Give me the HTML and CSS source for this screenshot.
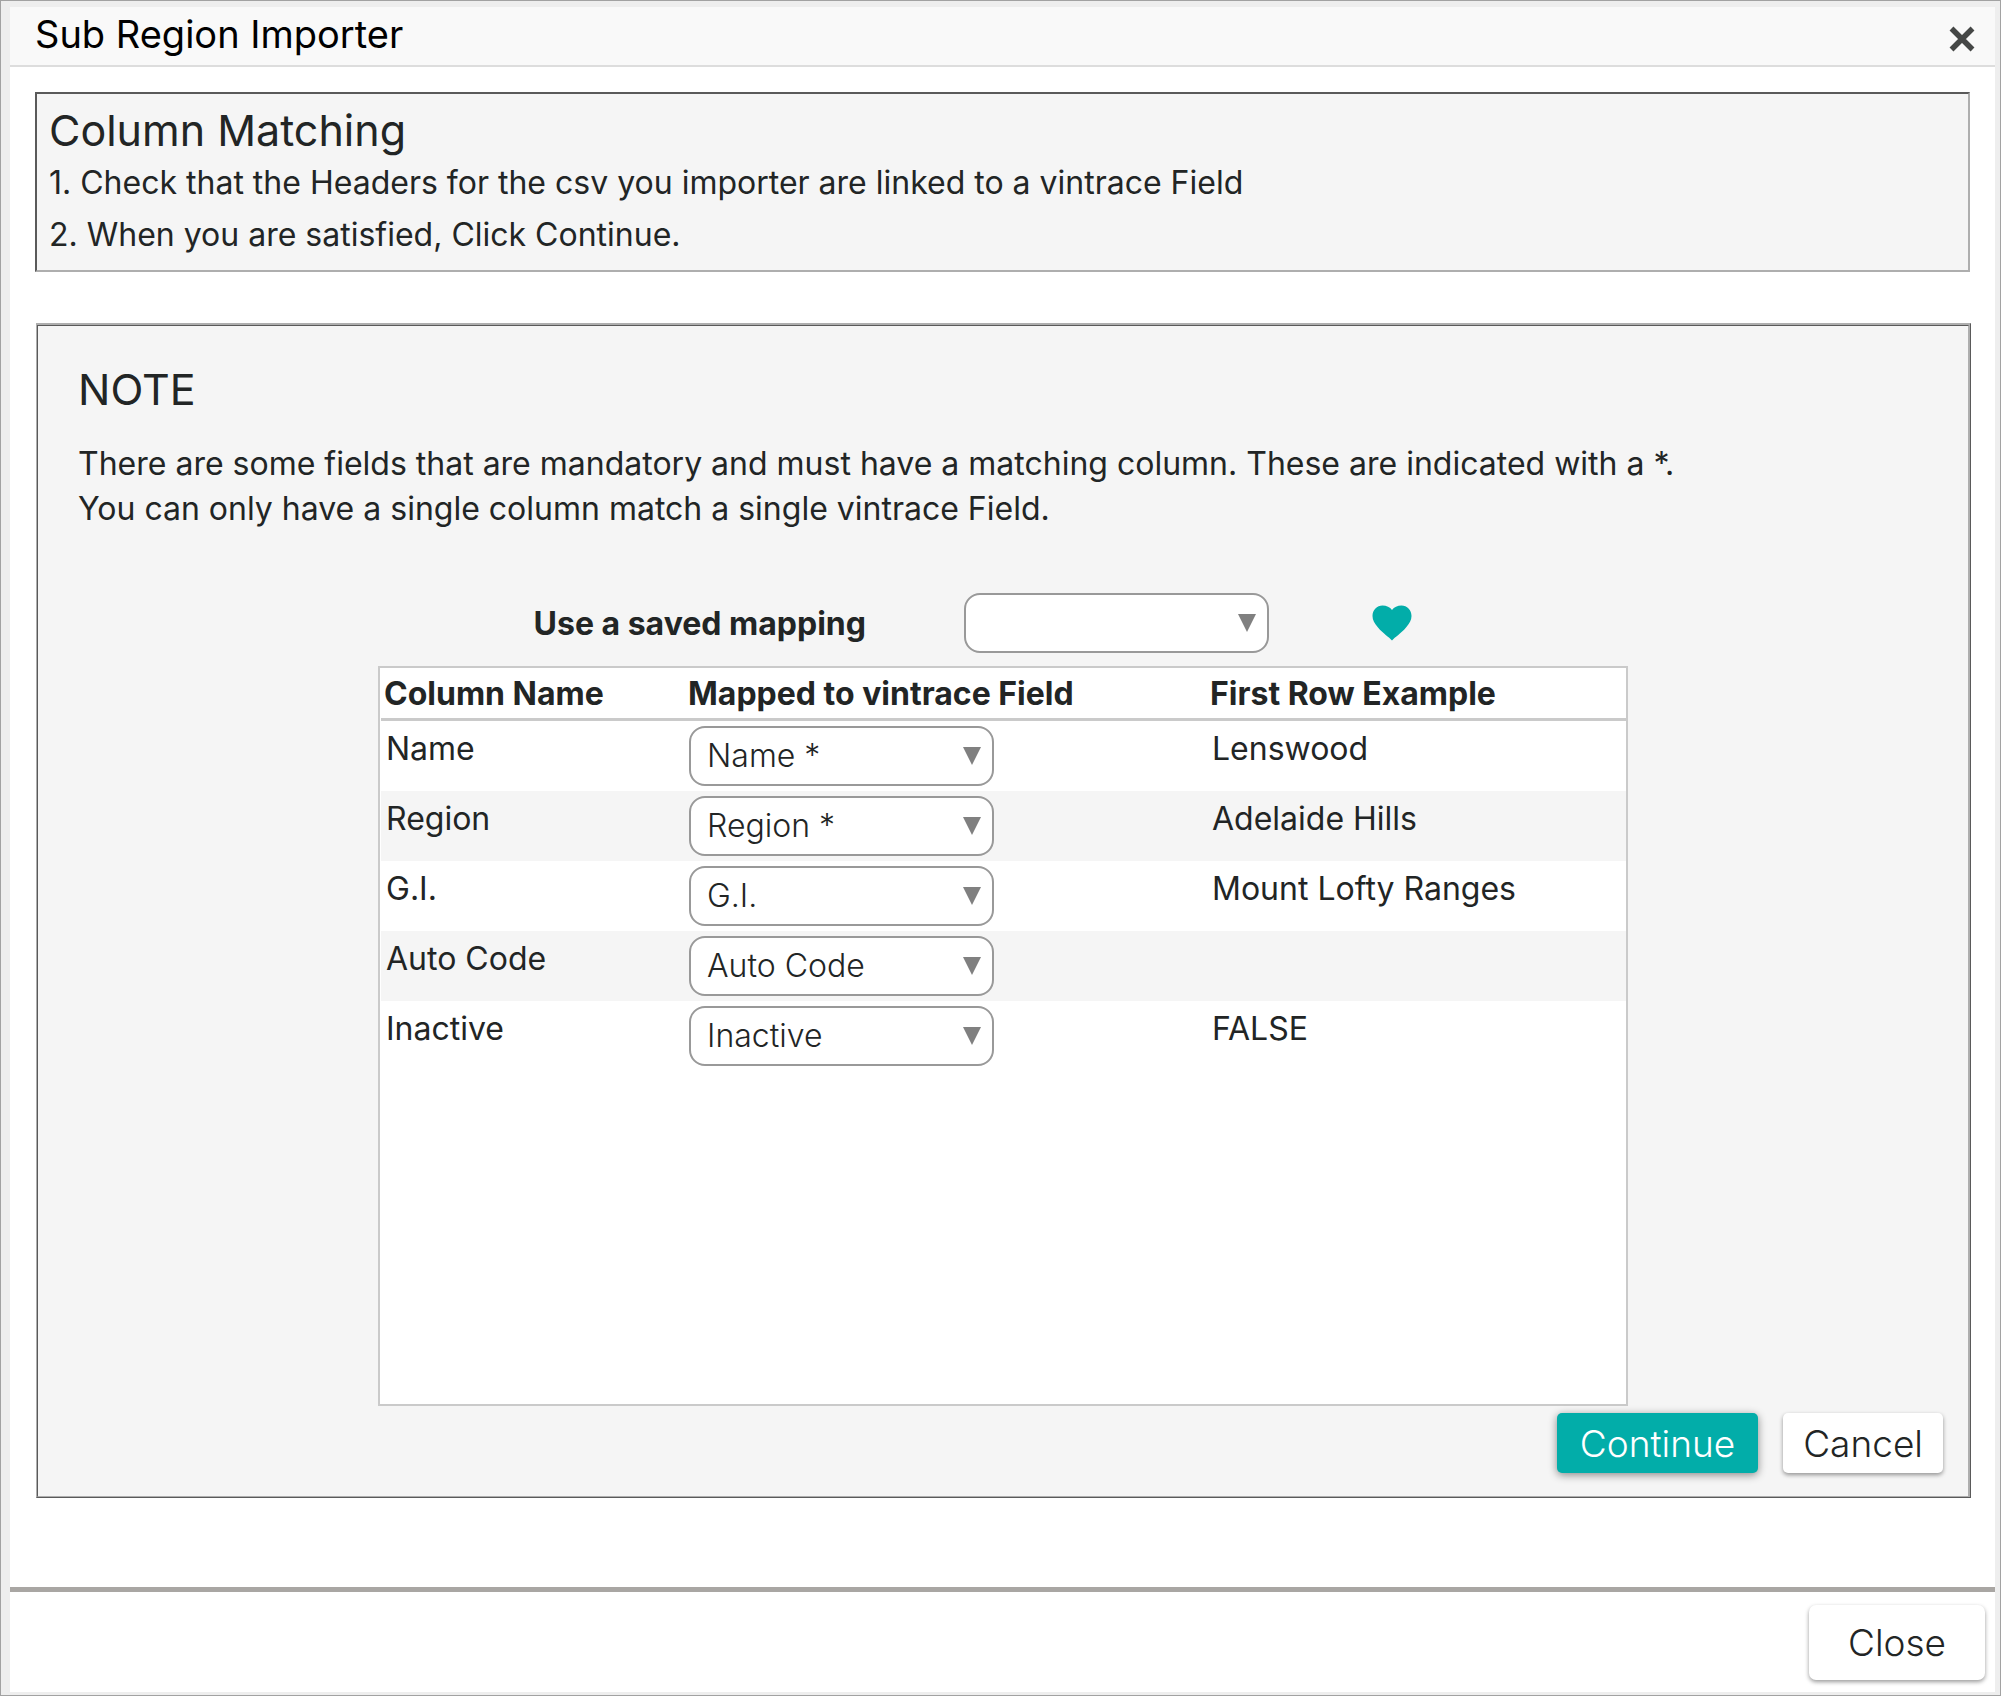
FILE: index.html
```html
<!DOCTYPE html>
<html lang="en">
<head>
	<meta charset="UTF-8">
	<title>Sub Region Importer</title>
	<link rel="stylesheet" href="styles.css">
</head>
<body>

	<div class="dialog">
		<header class="dialog-header">
			<h1 class="dialog-title">Sub Region Importer</h1>
			<button class="icon-btn dismiss" type="button" aria-label="Close dialog">
				<svg width="26" height="26" viewBox="0 0 26 26"><path d="M2.500 2.500L23.500 23.500M23.500 2.500L2.500 23.500" stroke="#454746" stroke-width="5.500" fill="none"/></svg>
			</button>
		</header>

		<main class="dialog-body">
			<section class="help">
				<h2 class="heading">Column Matching</h2>
				<p class="step">1. Check that the Headers for the csv you importer are linked to a vintrace Field</p>
				<p class="step">2. When you are satisfied, Click Continue.</p>
			</section>

			<section class="panel">
				<h2 class="heading">NOTE</h2>
				<p class="note">There are some fields that are mandatory and must have a matching column. These are indicated with a *.<br>You can only have a single column match a single vintrace Field.</p>

				<div class="mapping">
					<div class="saved">
						<label class="saved-label" for="saved">Use a saved mapping</label>
						<span class="select"><select id="saved"><option></option></select></span>
						<button class="icon-btn heart" type="button" aria-label="Save mapping">
							<svg width="40" height="36" viewBox="0 0 40 36"><path d="M20 35.500C17 32 11 28.500 6 22.500C2.500 18.500 .5 15 .5 11C.5 5 5 .5 10.500 .5C14.500 .5 18 2 20 5C22 2 25.500 .5 29.500 .5C35 .5 39.500 5 39.500 11C39.500 15 37.500 18.500 34 22.500C29 28.500 23 32 20 35.500Z" fill="#02ada9"/></svg>
						</button>
					</div>

					<div class="table-box">
						<table class="table">
							<thead>
								<tr>
									<th class="col-name">Column Name</th>
									<th class="col-field">Mapped to vintrace Field</th>
									<th>First Row Example</th>
								</tr>
							</thead>
							<tbody>
								<tr>
									<td>Name</td>
									<td class="cell-select"><span class="select"><select aria-label="Field for Name"><option>Name *</option></select></span></td>
									<td>Lenswood</td>
								</tr>
								<tr>
									<td>Region</td>
									<td class="cell-select"><span class="select"><select aria-label="Field for Region"><option>Region *</option></select></span></td>
									<td>Adelaide Hills</td>
								</tr>
								<tr>
									<td>G.I.</td>
									<td class="cell-select"><span class="select"><select aria-label="Field for G.I."><option>G.I.</option></select></span></td>
									<td>Mount Lofty Ranges</td>
								</tr>
								<tr>
									<td>Auto Code</td>
									<td class="cell-select"><span class="select"><select aria-label="Field for Auto Code"><option>Auto Code</option></select></span></td>
									<td></td>
								</tr>
								<tr>
									<td>Inactive</td>
									<td class="cell-select"><span class="select"><select aria-label="Field for Inactive"><option>Inactive</option></select></span></td>
									<td>FALSE</td>
								</tr>
							</tbody>
						</table>
					</div>
				</div>

				<div class="actions">
					<button class="btn btn-primary" type="button">Continue</button>
					<button class="btn" type="button">Cancel</button>
				</div>
			</section>
		</main>

		<footer class="dialog-footer">
			<button class="btn btn-large" type="button">Close</button>
		</footer>
	</div>

</body>
</html>
```

FILE: styles.css
```css
* {
	box-sizing: border-box;
}

body {
	margin: 0;
	font-family: Inter, "Open Sans", sans-serif;
	font-size: 32px;
	color: #222525;
}

h1, h2, p {
	margin: 0;
	font-weight: 400;
}

button, select {
	font-family: inherit;
	color: inherit;
}

/* window frame */
.dialog {
	display: flex;
	flex-direction: column;
	min-height: 100vh;
	padding: 6px 5px 3px 9px;
	border: 1px solid #a2a2a2;
	background-color: #eee;
}

.dialog-header {
	display: flex;
	justify-content: space-between;
	height: 60px;
	padding: 0 20px 0 25px;
	border-bottom: 2px solid #ddd;
	background-color: #f9f9f9;
}

.dialog-title {
	font-size: 38px;
	line-height: 54px;
	color: #000;
}

.icon-btn {
	display: flex;
	align-items: center;
	padding: 0;
	border: 0;
	background: none;
}

.dismiss {
	padding-top: 6px;
}

.dialog-body {
	flex: 1;
	padding: 25px 25px 20px;
	background-color: #fff;
}

.heading {
	font-size: 43px;
	line-height: 50px;
}

.help {
	padding: 11px 12px 9px;
	border: 2px inset #aeaeae;
	background-color: #f5f5f5;
}

.help .heading {
	margin-bottom: 2px;
}

.step {
	line-height: 52px;
}

.panel {
	margin: 51px -1px 0 1px;
	padding: 38px 25px 23px;
	border: 2px ridge #aeaeae;
	border-top-width: 3px;
	border-right-width: 3px;
	background-color: #f5f5f5;
}

.panel .heading,
.note {
	padding-left: 15px;
}

.note {
	margin-top: 27px;
	line-height: 45px;
}

/* saved mapping + table */
.mapping {
	max-width: 1250px;
	margin: 62px auto 0;
}

.saved {
	display: flex;
	align-items: center;
	margin-bottom: 13px;
}

.saved-label {
	width: 488px;
	margin-right: 98px;
	text-align: right;
	font-weight: 700;
}

.heart {
	margin-left: 103px;
}

.select {
	display: block;
	position: relative;
	width: 305px;
}

.select select {
	display: block;
	width: 100%;
	height: 60px;
	padding: 0 40px 0 16px;
	border: 2px solid #999;
	border-radius: 16px;
	background-color: #fff;
	font-size: 32px;
	font-weight: 300;
	appearance: none;
}

/* drop-down arrow */
.select:after {
	content: "";
	position: absolute;
	top: 21px;
	right: 13px;
	border: 9px solid transparent;
	border-top: 18px solid #808080;
	border-bottom: 0;
	pointer-events: none;
}

.table-box {
	height: 740px;
	padding-left: 1px;
	border: 2px solid #cacaca;
	background-color: #fff;
	overflow: auto;
}

.table {
	width: 100%;
	border-collapse: collapse;
	table-layout: fixed;
}

.table th {
	height: 51px;
	padding: 2px 3px 0;
	border-bottom: 3px solid #cacaca;
	text-align: left;
	white-space: nowrap;
}

.col-name {
	width: 304px;
}

.col-field {
	width: 522px;
}

.table td {
	height: 70px;
	padding: 10px 5px;
	line-height: 36px;
	vertical-align: top;
}

.table .cell-select {
	padding: 5px 4px;
}

.table tbody tr:nth-child(even) {
	background-color: #f5f5f5;
}

/* buttons */
.actions {
	display: flex;
	justify-content: flex-end;
	gap: 25px;
	margin-top: 7px;
}

.btn {
	height: 60px;
	padding: 0 20px;
	border: 0;
	border-radius: 5px;
	background-color: #fff;
	box-shadow: 0 2px 4px rgba(0, 0, 0, .4);
	font-size: 37px;
	font-weight: 300;
}

.btn-primary {
	padding: 0 23px;
	background-color: #02ada9;
	box-shadow: 0 2px 8px rgba(0, 0, 0, .45);
	color: #fff;
}

.btn-large {
	height: 75px;
	padding: 0 39px;
	border-radius: 7px;
}

.dialog-footer {
	display: flex;
	justify-content: flex-end;
	padding: 13px 10px 12px;
	border-top: 5px solid #a9a6a3;
	background-color: #fff;
}
```
